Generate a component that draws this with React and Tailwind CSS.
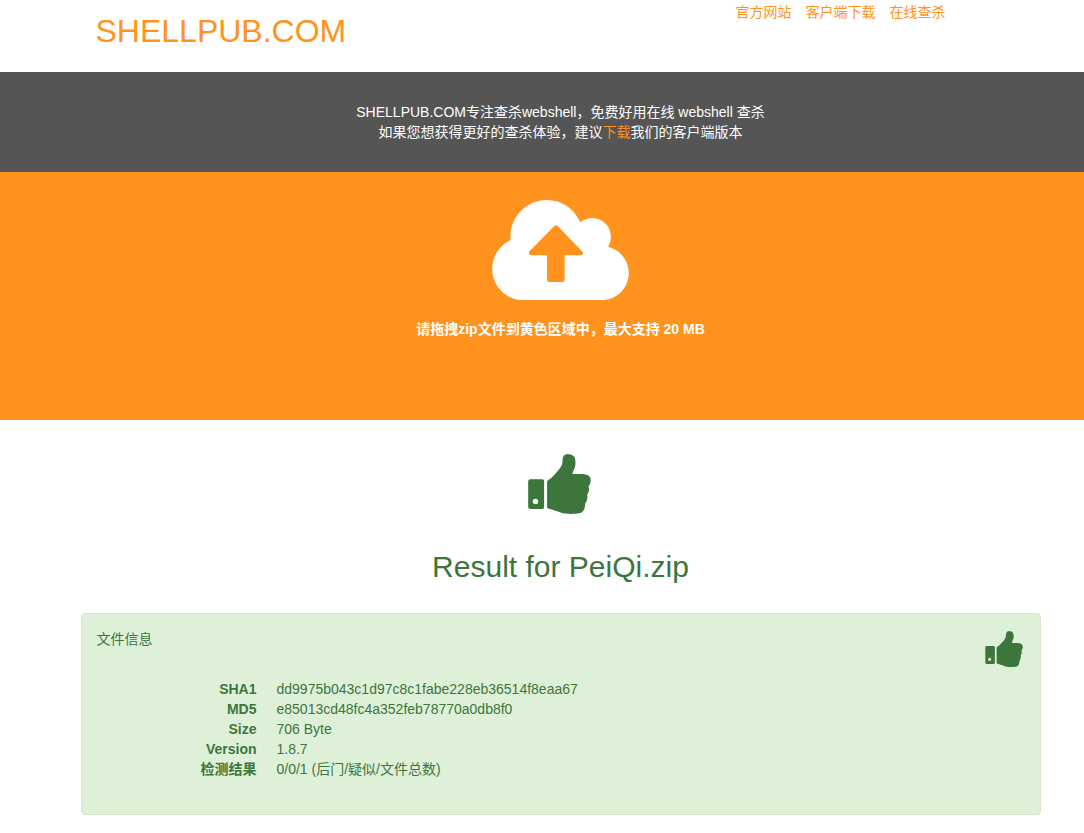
const fileInfo = [
  ["SHA1", "dd9975b043c1d97c8c1fabe228eb36514f8eaa67"],
  ["MD5", "e85013cd48fc4a352feb78770a0db8f0"],
  ["Size", "706 Byte"],
  ["Version", "1.8.7"],
  ["检测结果", "0/0/1 (后门/疑似/文件总数)"],
];

const navLinks = ["官方网站", "客户端下载", "在线查杀"];

function CloudUpload({ className }) {
  return (
    <svg viewBox="37 29 411 301" className={className} aria-hidden="true">
      <path
        fill="currentColor"
        fillRule="evenodd"
        d="M125 330C76 328 37 287 37 237C37 199 59 165 92 150V138C92 78 141 29 202 29C246 29 284 55 302 96C312 88 325 83 338 83C369 83 394 108 394 138C394 150 391 161 386 170C422 179 448 211 448 249C448 292 415 327 375 330Z
        M224 107L149 183Q146 188 149 192Q151 195 155 195H202V270Q202 276 208 276H249Q255 276 255 270V195H303Q307 195 309 192Q312 188 308 184L234 107Q229 103 224 107Z"
      />
    </svg>
  );
}

function ThumbsUp({ className }) {
  return (
    <svg viewBox="54 41 198 181" className={className} aria-hidden="true">
      <path
        fill="currentColor"
        fillRule="evenodd"
        d="M61 117H96Q102 117 102 123V201Q102 207 96 207H61Q54 207 54 201V123Q54 117 61 117ZM76 176A8 8 0 1 0 76 192A8 8 0 1 0 76 176Z"
      />
      <path
        fill="currentColor"
        d="M111 124Q112 119 121 116C135 103 148 88 155 76C159 66 157 58 159 51Q163 41 174 41Q186 42 192 48C197 56 198 68 195 80C192 90 187 97 188 101L220 101Q237 102 242 114C244 124 241 132 236 139C239 149 237 158 232 163C234 173 232 183 226 190C226 203 222 215 212 219C198 222 172 223 157 219C145 216 133 211 120 207Q111 206 111 200Z"
      />
    </svg>
  );
}

function Band({ as: Tag = "section", className = "", children }) {
  return (
    <Tag className={`pl-[37px] ${className}`}>
      <div className="mx-auto max-w-[960px]">{children}</div>
    </Tag>
  );
}

export default function App() {
  return (
    <div className="bg-white pb-4 font-['Liberation_Sans','Noto_Sans_CJK_SC',sans-serif] text-sm leading-5 text-[#333]">
      <Band as="header">
        <div className="flex items-start justify-between pr-[95px] pb-[23px] pl-[15px]">
          <h1 className="pt-[13px] text-[32px] leading-9 text-[#ff931e]">
            <a href="#home">SHELLPUB.COM</a>
          </h1>
          <nav className="flex gap-3.5 pt-0.5 text-[#ff931e]">
            {navLinks.map((label) => (
              <a key={label} href="#nav">
                {label}
              </a>
            ))}
          </nav>
        </div>
      </Band>

      <Band className="bg-[#555] py-[30px] text-center text-white">
        <p>SHELLPUB.COM专注查杀webshell，免费好用在线 webshell 查杀</p>
        <p>
          如果您想获得更好的查杀体验，建议
          <a href="#download" className="text-[#ff931e]">
            下载
          </a>
          我们的客户端版本
        </p>
      </Band>

      <Band className="bg-[#ff931e] pt-7 pb-[81px] text-white">
        <div className="flex flex-col items-center gap-[19px]">
          <CloudUpload className="h-[100px] w-[137px]" />
          <p className="font-bold">请拖拽zip文件到黄色区域中，最大支持 20 MB</p>
        </div>
      </Band>

      <Band as="main" className="pt-[34px] text-[#3c763d]">
        <div className="flex flex-col items-center gap-[37px]">
          <ThumbsUp className="h-[60px] w-[66px]" />
          <h2 className="text-[30px] leading-8">Result for PeiQi.zip</h2>
        </div>

        <section className="mt-[30px] rounded-sm border border-[#d6e9c6] bg-[#dff0d8] px-[15px] pt-[15px] pb-[35px]">
          <div className="flex h-[50px] items-start justify-between">
            <h3>文件信息</h3>
            <ThumbsUp className="mt-0.5 h-9 w-10" />
          </div>
          <dl className="grid grid-cols-[160px_1fr] gap-x-5">
            {fileInfo.map(([name, value]) => (
              <div key={name} className="contents">
                <dt className="text-right font-bold">{name}</dt>
                <dd className="min-w-0 break-words">{value}</dd>
              </div>
            ))}
          </dl>
        </section>
      </Band>
    </div>
  );
}
